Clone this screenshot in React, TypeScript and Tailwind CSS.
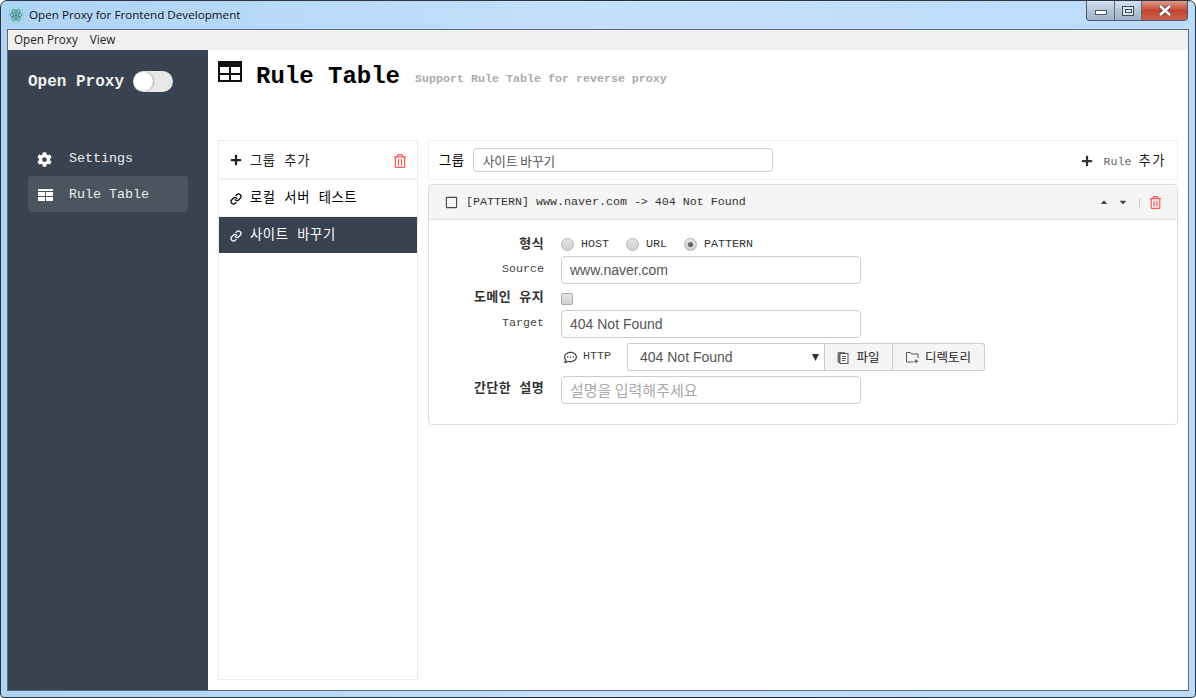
// Rule Table screen of Open Proxy, inside its Windows 7 style window frame.
import { FaCaretDown, FaCaretUp, FaCog, FaPlus, FaRegCommentDots, FaRegSquare, FaRegTrashAlt } from "react-icons/fa";
import { Link } from "lucide-react";

const mono = "font-['Liberation_Mono','Noto_Sans_CJK_KR',monospace]";
const kr = "font-['Noto_Sans_CJK_KR','Liberation_Sans',sans-serif]";

function AppIcon() {
  return (
    <svg width="16" height="16" viewBox="0 0 16 16" className="shrink-0">
      <circle cx="8" cy="8" r="8" fill="#8fd6dc" />
      <g fill="none" stroke="#4d7f8c" strokeWidth="0.8">
        <ellipse cx="8" cy="8" rx="6" ry="2.4" />
        <ellipse cx="8" cy="8" rx="6" ry="2.4" transform="rotate(60 8 8)" />
        <ellipse cx="8" cy="8" rx="6" ry="2.4" transform="rotate(120 8 8)" />
      </g>
      <circle cx="8" cy="8" r="1.2" fill="#4d7f8c" />
    </svg>
  );
}

function TitleTableIcon() {
  return (
    <svg width="24" height="21" viewBox="0 0 24 21" className="shrink-0" shapeRendering="crispEdges">
      <rect width="24" height="21" fill="#111" />
      <rect x="2" y="6" width="9" height="6" fill="#fff" />
      <rect x="13" y="6" width="9" height="6" fill="#fff" />
      <rect x="2" y="14" width="9" height="5" fill="#fff" />
      <rect x="13" y="14" width="9" height="5" fill="#fff" />
    </svg>
  );
}

function NavTableIcon() {
  return (
    <svg width="15" height="12" viewBox="0 0 15 12" className="shrink-0" shapeRendering="crispEdges">
      <rect width="15" height="12" fill="#fff" />
      <rect x="0" y="2" width="15" height="1" fill="#4b5560" />
      <rect x="0" y="7" width="15" height="1" fill="#4b5560" />
      <rect x="7" y="2" width="1" height="10" fill="#4b5560" />
    </svg>
  );
}

function FileIcon() {
  return (
    <svg width="12" height="13" viewBox="0 0 12 13" className="shrink-0">
      <rect x="0.5" y="1" width="8" height="11" rx="1" fill="#777" />
      <rect x="3" y="2.5" width="8" height="10" fill="#f5f5f5" stroke="#555" />
      <path d="M5 5.5h4M5 7.5h4M5 9.5h3" stroke="#555" fill="none" />
    </svg>
  );
}

function FolderIcon() {
  return (
    <svg width="13" height="11" viewBox="0 0 13 11" className="shrink-0" fill="none" stroke="#555">
      <path d="M7.5 10H0.5V0.5H4.5L5.5 2H12V6" />
      <path d="M10 7.5V11M8.5 9.2H12" stroke="#333" />
    </svg>
  );
}

function WindowButtons() {
  return (
    <div className="mr-[1px] flex h-[20px] w-[102px] shrink-0 overflow-hidden rounded-b-[4px] border border-t-0 border-[#4a5868]">
      <div className="flex w-[28px] items-end justify-center border-r border-[#5d6b7a] bg-gradient-to-b from-[#d5e3f0] via-[#b4c6d8] to-[#9fb4c8] pb-[5px]">
        <div className="h-[5px] w-[12px] border border-[#4a5868] bg-white" />
      </div>
      <div className="flex w-[27px] items-center justify-center border-r border-[#5d6b7a] bg-gradient-to-b from-[#d5e3f0] via-[#b4c6d8] to-[#9fb4c8]">
        <div className="flex h-[10px] w-[12px] items-center justify-center border border-[#3f4c5a] bg-[#dbe6f0]">
          <div className="h-[4px] w-[7px] border border-[#3f4c5a]" />
        </div>
      </div>
      <div className="flex flex-1 items-center justify-center bg-gradient-to-b from-[#dd9a8c] via-[#c4442f] to-[#c9624c]">
        <svg width="14" height="11" viewBox="0 0 14 11">
          <path d="M2 1 L12 10 M12 1 L2 10" stroke="#4a4a4a" strokeWidth="4" />
          <path d="M2 1 L12 10 M12 1 L2 10" stroke="#fff" strokeWidth="2.4" />
        </svg>
      </div>
    </div>
  );
}

function Radio({ label, checked }: { label: string; checked?: boolean }) {
  return (
    <span className="flex items-center gap-[7px]">
      <span className="flex h-[13px] w-[13px] items-center justify-center rounded-full border border-[#b5b5b5] bg-gradient-to-b from-[#e4e4e4] to-[#d0d0d0]">
        {checked && <span className="h-[5px] w-[5px] rounded-full bg-[#666]" />}
      </span>
      <span className="text-[11.67px] text-[#333]">{label}</span>
    </span>
  );
}

function TextField({ value, placeholder }: { value?: string; placeholder?: string }) {
  return (
    <input
      readOnly
      value={value ?? ""}
      placeholder={placeholder}
      className={`h-[28px] w-[300px] rounded-[4px] border border-[#ccc] bg-white px-2 text-[#555] outline-none placeholder:text-[#aaa] ${value ? "font-['Liberation_Sans',sans-serif] text-[14px]" : `${kr} pb-[2px] text-[15px]`}`}
    />
  );
}

function Label({ children, bold }: { children: string; bold?: boolean }) {
  return <span className={`w-[115px] shrink-0 text-right ${bold ? "pb-[2px] text-[13px] font-bold tracking-[0.4px] text-[#333]" : "text-[11.67px] text-[#444]"}`}>{children}</span>;
}

export default function App() {
  return (
    <div className={`flex h-[698px] w-[1196px] flex-col overflow-hidden rounded-t-[7px] rounded-b-[4px] border border-[#2b3540] bg-gradient-to-r from-[#aed4f6] via-[#c4e0fb] to-[#bcdcfa] px-[6px] pb-[6px] ${mono}`}>
      <header className="flex h-[28px] shrink-0 items-start justify-between">
        <div className="flex items-center gap-[5px] pl-[1px] pt-[6px]">
          <AppIcon />
          <span className="font-['Open_Sans',sans-serif] text-[11.67px] leading-[16px] text-[#111]">Open Proxy for Frontend Development</span>
        </div>
        <WindowButtons />
      </header>

      <div className="flex min-h-0 flex-1 flex-col border border-[#5b6b7b] bg-white">
        <nav className="flex h-[20px] shrink-0 items-center gap-[12px] bg-[#f0f0f0] px-[6px] font-['Open_Sans',sans-serif] text-[11.7px] text-[#222]">
          <span>Open Proxy</span>
          <span>View</span>
        </nav>

        <div className="flex min-h-0 flex-1">
          <aside className="flex w-[200px] shrink-0 flex-col bg-[#384250] px-[20px] text-white">
            <div className="flex h-[60px] items-center gap-[9px] pt-[2px]">
              <span className="pt-[2px] text-[16px] font-bold text-[#f0f0f0]">Open Proxy</span>
              <span className="flex h-[21px] w-[40px] items-center rounded-full bg-[#e8e8e8]">
                <span className="h-[19px] w-[19px] translate-x-[1px] rounded-full bg-white shadow-[1px_0_2px_rgba(0,0,0,0.25)]" />
              </span>
            </div>
            <div className="mt-[30px] flex h-[36px] items-center gap-[17px] pl-[9px] pt-[2px] text-[13.33px] text-[#eee]">
              <FaCog size={15} className="text-white" />
              <span>Settings</span>
            </div>
            <div className="flex h-[36px] items-center gap-[16px] rounded-[4px] bg-[#4b5560] pl-[10px] pt-[2px] text-[13.33px] text-[#eee]">
              <NavTableIcon />
              <span>Rule Table</span>
            </div>
          </aside>

          <main className="flex min-w-0 flex-1 flex-col px-[10px] pb-[10px]">
            <div className="flex h-[90px] shrink-0 items-start pt-[11px] text-black">
              <TitleTableIcon />
              <h1 className="ml-[14px] mt-[2px] text-[24px] font-bold leading-[28px]">Rule Table</h1>
              <span className="ml-[15px] mt-[10px] text-[11.67px] font-bold leading-[16px] text-[#aaa]">Support Rule Table for reverse proxy</span>
            </div>

            <div className="flex min-h-0 flex-1 gap-[10px]">
              <section className="flex w-[200px] shrink-0 flex-col border border-[#ececec] text-[13.33px] tracking-[0.6px]">
                <div className="flex h-[39px] items-center justify-between border-b-2 border-[#f0f0f0] pl-[11px] pr-[10px] pt-[2px]">
                  <span className="flex items-center gap-[8px] text-[#222]">
                    <FaPlus size={12} />
                    <span className="pt-[2px]">그룹 추가</span>
                  </span>
                  <FaRegTrashAlt size={14} className="text-[#ff5a5a]" />
                </div>
                <div className="flex h-[37px] items-center gap-[8px] border-b border-[#f0f0f0] pl-[11px] pt-[2px] text-black">
                  <Link size={12} strokeWidth={2.5} />
                  로컬 서버 테스트
                </div>
                <div className="flex h-[36px] items-center gap-[8px] bg-[#384250] pl-[11px] pt-[2px] text-white">
                  <Link size={12} strokeWidth={2.5} />
                  사이트 바꾸기
                </div>
              </section>

              <section className="flex min-w-0 flex-1 flex-col gap-[4px]">
                <div className="flex h-[40px] shrink-0 items-center justify-between border border-[#f0f0f0] pl-[10px] pr-[11px]">
                  <div className="flex items-center gap-[8px]">
                    <span className={`${kr} text-[13.33px] tracking-[0.6px] text-black`}>그룹</span>
                    <input
                      readOnly
                      value="사이트 바꾸기"
                      className={`${kr} h-[24px] w-[300px] rounded-[4px] border border-[#ccc] px-[9px] text-[12.6px] text-[#555] outline-none`}
                    />
                  </div>
                  <span className="flex items-center gap-[10px] pt-[2px] text-[11.67px] text-[#666]">
                    <FaPlus size={12} className="text-[#333]" />
                    <span className="pt-[2px]">
                      Rule <span className="text-[13.33px] tracking-[1.5px] text-[#222]">추가</span>
                    </span>
                  </span>
                </div>

                <div className="h-[241px] shrink-0 rounded-[4px] border border-[#ddd]">
                  <div className="flex h-[35px] items-center justify-between rounded-t-[4px] border-b border-[#ddd] bg-[#f5f5f5] pl-[16px] pr-[15px]">
                    <div className="flex items-center gap-[8px]">
                      <FaRegSquare size={13} className="text-[#44505c]" />
                      <span className="pt-[2px] text-[11.67px] text-[#333]">[PATTERN] www.naver.com -&gt; 404 Not Found</span>
                    </div>
                    <div className="flex items-center gap-[9px] text-[#444]">
                      <FaCaretUp size={10} />
                      <FaCaretDown size={10} />
                      <span className="ml-[2px] h-[9px] w-px bg-[#ccc]" />
                      <FaRegTrashAlt size={13} className="text-[#ff5a5a]" />
                    </div>
                  </div>

                  <div className="flex flex-col pt-[15px]">
                    <div className="flex h-[21px] items-center gap-[17px]">
                      <Label bold>형식</Label>
                      <div className="flex items-center gap-[17px] pb-[2px]">
                        <Radio label="HOST" />
                        <Radio label="URL" />
                        <Radio label="PATTERN" checked />
                      </div>
                    </div>
                    <div className="flex h-[28px] items-center gap-[17px]">
                      <Label>Source</Label>
                      <TextField value="www.naver.com" />
                    </div>
                    <div className="mt-[4px] flex h-[22px] items-center gap-[17px]">
                      <Label bold>도메인 유지</Label>
                      <span className="h-[12px] w-[12px] rounded-[2px] border border-[#aaa] bg-gradient-to-b from-[#e6e6e6] to-[#cfcfcf]" />
                    </div>
                    <div className="flex h-[28px] items-center gap-[17px]">
                      <Label>Target</Label>
                      <TextField value="404 Not Found" />
                    </div>
                    <div className="ml-[135px] mt-[5px] flex h-[28px] items-center">
                      <span className="flex w-[63px] items-center gap-[6px] text-[11.67px] text-[#444]">
                        <FaRegCommentDots size={13} />
                        HTTP
                      </span>
                      <div className="flex h-[28px] w-[198px] items-center justify-between rounded-l-[2px] border border-[#ccc] pl-[12px] pr-[5px] font-['Liberation_Sans',sans-serif] text-[14px] text-[#555]">
                        404 Not Found
                        <svg width="7" height="7" viewBox="0 0 7 7">
                          <path d="M0 0H7L3.5 7Z" fill="#333" />
                        </svg>
                      </div>
                      <div className={`${kr} flex h-[28px] w-[68px] items-center justify-center gap-[7px] border-y border-r border-[#ccc] bg-[#f5f5f5] text-[12.5px] text-[#222]`}>
                        <FileIcon />
                        파일
                      </div>
                      <div className={`${kr} flex h-[28px] w-[92px] items-center justify-center gap-[6px] rounded-r-[3px] border-y border-r border-[#ccc] bg-[#f5f5f5] text-[12.5px] text-[#222]`}>
                        <FolderIcon />
                        디렉토리
                      </div>
                    </div>
                    <div className="mt-[5px] flex h-[28px] items-center gap-[17px]">
                      <Label bold>간단한 설명</Label>
                      <TextField placeholder="설명을 입력해주세요" />
                    </div>
                  </div>
                </div>
              </section>
            </div>
          </main>
        </div>
      </div>
    </div>
  );
}
